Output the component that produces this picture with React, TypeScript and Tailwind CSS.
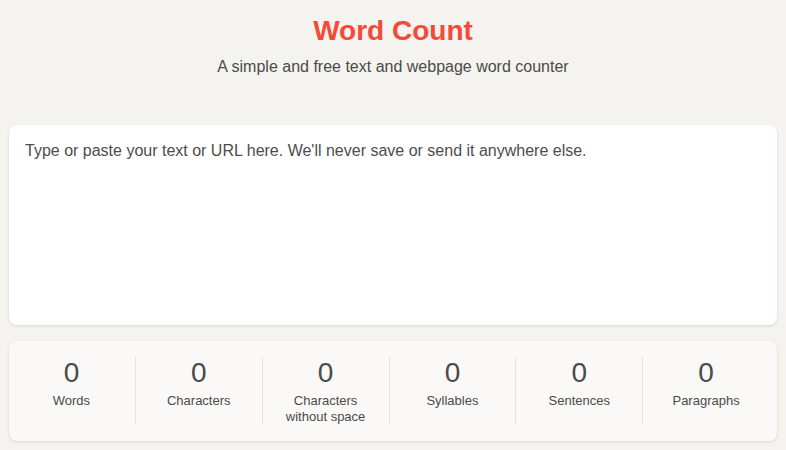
import { useState } from 'react'

const stats = [
    { label: 'Words' },
    { label: 'Characters' },
    { label: 'Characters without space' },
    { label: 'Syllables' },
    { label: 'Sentences' },
    { label: 'Paragraphs' },
]

export default function App() {
    const [text, setText] = useState('')

    return (
        <div className="min-h-screen bg-[#f5f3ef] px-[9px] pt-[15px] pb-4 font-['Liberation_Sans',Arial,sans-serif] text-[#4a4a4a]">
            {/* Header */}
            <header className="text-center">
                <h1 className="text-[28px] leading-8 font-bold text-[#f44a3a]">Word Count</h1>
                <p className="mt-2 text-base leading-6 text-[#4a4a4a]">A simple and free text and webpage word counter</p>
            </header>

            {/* Input */}
            <div className="mt-[46px] rounded-lg bg-white shadow-[0_1px_3px_rgba(0,0,0,0.12)]">
                <textarea
                    autoFocus
                    value={text}
                    onChange={(e) => setText(e.target.value)}
                    placeholder="Type or paste your text or URL here. We'll never save or send it anywhere else."
                    className="block h-[200px] w-full resize-none bg-transparent p-4 text-base leading-[1.2] text-[#4a4a4a] placeholder:text-[#4d4d4d] caret-[#e0453a] outline-none"
                />
            </div>

            {/* Stats */}
            <div className="mt-4 rounded-lg bg-[#faf9f7] py-4 pr-[8px] shadow-[0_1px_3px_rgba(0,0,0,0.12)]">
                <div className="-ml-px grid grid-cols-6">
                    {stats.map(({ label }, i) => (
                        <div
                            key={label}
                            className={`flex h-[68px] flex-col items-center text-center ${i > 0 ? 'border-l border-[#e4e2de]' : ''}`}
                        >
                            <div className="text-[28px] leading-8 text-[#4a4a4a]">0</div>
                            <div className="mt-1 px-2 text-[13px] leading-4 text-[#4a4a4a]">
                                {label === 'Characters without space' ? <>Characters<br />without space</> : label}
                            </div>
                        </div>
                    ))}
                </div>
            </div>
        </div>
    )
}
